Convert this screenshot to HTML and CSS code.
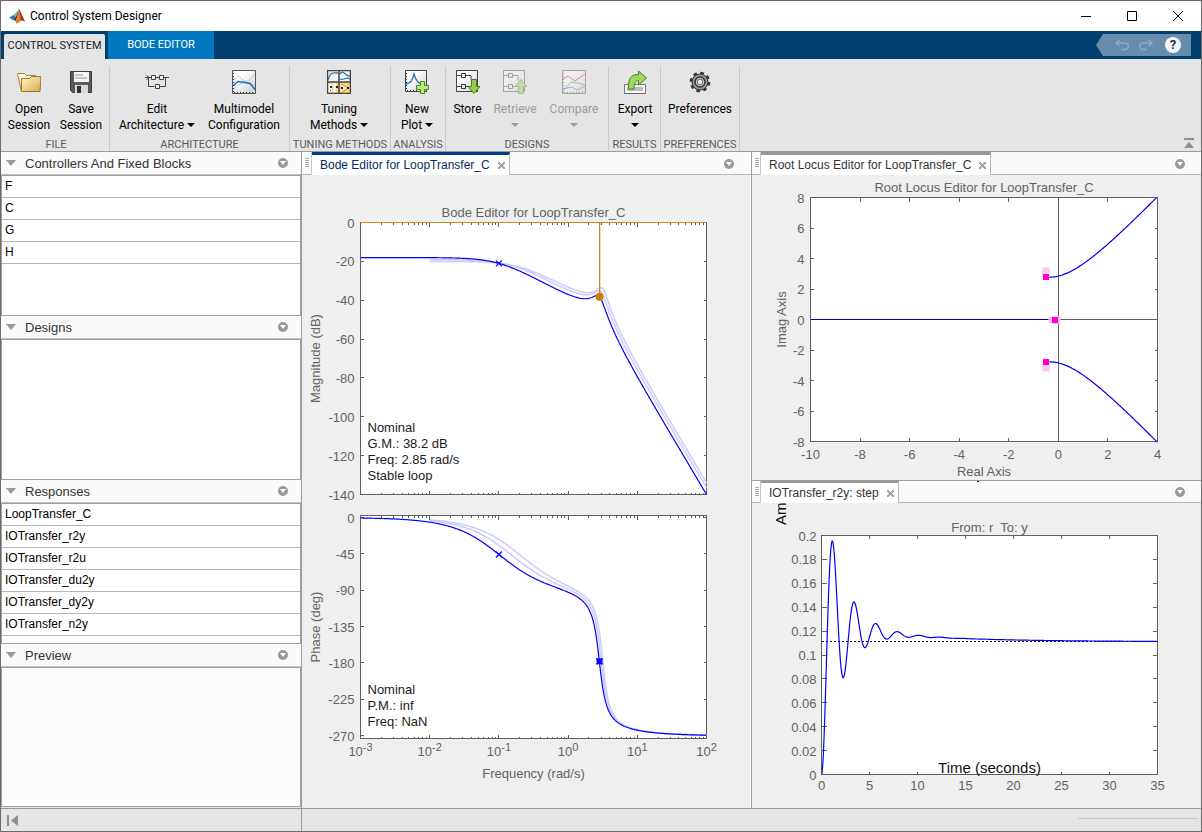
FILE: index.html
```html
<!DOCTYPE html>
<html lang="en">
<head>
<meta charset="utf-8">
<title>Control System Designer</title>
<link rel="stylesheet" href="styles.css">
</head>
<body>
<div class="window">
  <header class="titlebar">
    <svg class="logo" viewBox="0 0 16 16" width="16" height="16" aria-hidden="true">
      <path d="M0 9.400 4.600 7l2.200 1.800L4 12z" fill="#3f79b0"/>
      <path d="M4.600 7C6.500 6 7 3.600 9 2.200L6.800 8.800z" fill="#5fb4c9"/>
      <path d="M4 12 6.800 8.800 9.800 1.200C9 5 8.600 9 6.600 13.200 5.800 12.200 5 12 4 12z" fill="#5a2a3c"/>
      <path d="M9.800 1C10.700 1 12 5.500 16 13.600 13.800 12.200 12.400 12.300 11 13.600 9.800 15 8.500 15.200 7.200 15.400 6.900 14.400 6.800 13.800 6.600 13.200 8.600 10 9 5 9.800 1z" fill="#e07a28"/>
      <path d="M9.800 1C10.700 1 12 5.500 16 13.600 13.600 11.800 13 12 12 12.400 11.700 8.500 10.600 4 9.800 1z" fill="#9c2f1c"/>
    </svg>
    <h1 class="title">Control System Designer</h1>
    <div class="win-buttons">
      <button class="win-btn" aria-label="Minimize"><svg viewBox="0 0 12 12" width="12" height="12"><path d="M1 6.500h10" stroke="#000"/></svg></button>
      <button class="win-btn" aria-label="Maximize"><svg viewBox="0 0 12 12" width="12" height="12"><path d="M1.500 1.500h9v9h-9z" fill="none" stroke="#000"/></svg></button>
      <button class="win-btn" aria-label="Close"><svg viewBox="0 0 12 12" width="12" height="12"><path d="M1 1l10 10M11 1 1 11" stroke="#000"/></svg></button>
    </div>
  </header>

  <nav class="tabstrip">
    <button class="main-tab is-active">CONTROL SYSTEM</button>
    <button class="main-tab">BODE EDITOR</button>
    <div class="quick">
      <button class="quick-btn" aria-label="Undo"><svg viewBox="0 0 14 12" width="14" height="12"><path d="M4.500 1 1 4l3.500 3M1.500 4H10a2.600 2.600 0 0 1 0 6.500H6.500" fill="none" stroke="#85aed0" stroke-width="1.500"/></svg></button>
      <button class="quick-btn" aria-label="Redo"><svg viewBox="0 0 14 12" width="14" height="12"><path d="M9.500 1 13 4 9.500 7M12.500 4H4a2.600 2.600 0 0 0 0 6.500h3.500" fill="none" stroke="#85aed0" stroke-width="1.500"/></svg></button>
      <button class="quick-btn help" aria-label="Help">?</button>
    </div>
  </nav>

  <div class="ribbon">
    <section class="group g-file">
      <div class="tools">
        <button class="tool w52">
          <svg viewBox="0 0 24 24" width="24" height="24"><defs><linearGradient id="fold" x1="0" y1="0" x2="1" y2="1"><stop offset="0" stop-color="#fff6cc"/><stop offset="1" stop-color="#d9a94e"/></linearGradient></defs><path d="M.5 3.500h7l2 2h9v3l-14 13z" fill="#fbf3d4" stroke="#a0803c"/><path d="M4.500 8.500h8l2-2h9.500l-1 15H4.500z" fill="url(#fold)" stroke="#a07828"/></svg>
          <span>Open<br>Session</span></button>
        <button class="tool w52">
          <svg viewBox="0 0 24 24" width="24" height="24"><path d="M1.500 1.500h21v21h-19l-2-2z" fill="#5a5a5a" stroke="#3c3c3c"/><path d="M5 2h15v10H5z" fill="#f4f4f4"/><path d="M6 5h8M6 8h12" stroke="#999"/><path d="M6 15h13v8H6z" fill="#d8d8d8"/><path d="M8 16h4v7H8z" fill="#333"/></svg>
          <span>Save<br>Session</span></button>
      </div>
      <h2>FILE</h2>
    </section>
    <section class="group g-arch">
      <div class="tools">
        <button class="tool w94">
          <svg viewBox="0 0 24 24" width="24" height="24" fill="none" stroke="#444"><path d="M0 7.500h6M11 7.500h3M19 7.500h5M1.500 5.500l3 2-3 2M20.500 8v8.500h-6M3.500 8v8.500h6"/><path d="M6.500 5.500h4v4h-4zM14.500 5.500h4v4h-4zM10.500 14.500h4v4h-4z" fill="#eee"/></svg>
          <span>Edit<br>Architecture <i class="caret"></i></span></button>
        <button class="tool w80">
          <svg viewBox="0 0 24 24" width="24" height="24"><defs><linearGradient id="sheet" x1="0" y1="0" x2="1" y2="1"><stop offset=".3" stop-color="#fff"/><stop offset="1" stop-color="#ccc"/></linearGradient></defs><path d="M.5.500h23v23H.5z" fill="url(#sheet)" stroke="#555"/><path d="M1 17C6 2 5 5 11 10s9-5 12-6M1 20C8 12 15 10 23 16" fill="none" stroke="#a9c9ea"/><path d="M1 16 6 11.500l7 1 5 1 5 6" fill="none" stroke="#1f6fc0" stroke-width="1.500"/><path d="M2 22.500h21M1.500 3v19" stroke="#333" stroke-dasharray="1 2"/></svg>
          <span>Multimodel<br>Configuration</span></button>
      </div>
      <h2>ARCHITECTURE</h2>
    </section>
    <section class="group g-tuning">
      <div class="tools">
        <button class="tool w98">
          <svg viewBox="0 0 24 24" width="24" height="24"><path d="M.5.500h23v23H.5z" fill="#f4f4f4"/><path d="M1 12h11v12H1zM12 12h12v12H12z" fill="#f8d28a"/><path d="M1 14h4v8H1z" fill="#fff"/><path d="M1 10c3-9 5-7 10-7M13 4c4-5 4 2 10 2M13 9c4 2 6-3 10 0" fill="none" stroke="#3379b5" stroke-width="1.300"/><path d="M14 14l7 4-7 5" fill="#fff3d5" stroke="#e08c20"/><path d="M7.500 13v10" stroke="#fff" stroke-width="2"/><path d="M3 16h2v2H3zM9 16h2v2H9zM3 20h1v1H3zM14 17h2v2h-2zM20 17h2v2h-2z" fill="#222"/><path d="M.5.500h23v23H.5zM12 0v24M0 12h24" fill="none" stroke="#444" stroke-width="1.500"/></svg>
          <span>Tuning<br>Methods <i class="caret"></i></span></button>
      </div>
      <h2>TUNING METHODS</h2>
    </section>
    <section class="group g-analysis">
      <div class="tools">
        <button class="tool w52">
          <svg viewBox="0 0 24 24" width="24" height="24"><path d="M.5.500h21v21H.5z" fill="url(#sheet)" stroke="#444"/><path d="M1 14c5-1 6-3 8-10 2 7 4 9 9 11" fill="none" stroke="#2878b4" stroke-width="1.300"/><path d="M2 20.500h12M1.500 3v17" stroke="#333" stroke-dasharray="1 2"/><path d="M15.500 11.500h4v4h4v4h-4v4h-4v-4h-4v-4h4z" fill="#b8ea74" stroke="#458a2c"/></svg>
          <span>New<br>Plot <i class="caret"></i></span></button>
      </div>
      <h2>ANALYSIS</h2>
    </section>
    <section class="group g-designs">
      <div class="tools">
        <button class="tool w43">
          <svg viewBox="0 0 24 24" width="24" height="24"><path d="M.5.500h21v21H.5z" fill="url(#sheet)" stroke="#444"/><path d="M1 5.500h4M10 5.500h5v4M1 16.500h4M10 16.500h3" fill="none" stroke="#444"/><path d="M5.500 3.500h4v4h-4zM5.500 14.500h4v4h-4z" fill="#eee" stroke="#333"/><path d="M15.500 9.500h5v7h3.500l-6 7-6-7h3.500z" fill="#97cc48" stroke="#3f8428"/></svg>
          <span>Store</span></button>
        <button class="tool w52" disabled>
          <svg viewBox="0 0 24 24" width="24" height="24"><path d="M.5.500h21v21H.5z" fill="url(#sheet)" stroke="#444"/><path d="M1 5.500h4M10 5.500h5v5M1 16.500h4M10 16.500h3" fill="none" stroke="#444"/><path d="M5.500 3.500h4v4h-4zM5.500 14.500h4v4h-4z" fill="#eee" stroke="#333"/><path d="M15.500 23.500h5v-7H24l-6-7-6 7h3.500z" fill="#97cc48" stroke="#3f8428"/></svg>
          <span>Retrieve<br><i class="caret"></i></span></button>
        <button class="tool w66" disabled>
          <svg viewBox="0 0 24 24" width="24" height="24"><path d="M.5.500h23v23H.5z" fill="url(#sheet)" stroke="#444"/><path d="M1 9l5-3 7 5 10-7" fill="none" stroke="#d02020"/><path d="M2 20 9 12l7 1 7 2" fill="none" stroke="#28902c"/><path d="M1 19l9-2 5 3 8-4" fill="none" stroke="#2a60c0"/><path d="M2 22.500h21M1.500 3v19" stroke="#333" stroke-dasharray="1 2"/></svg>
          <span>Compare<br><i class="caret"></i></span></button>
      </div>
      <h2>DESIGNS</h2>
    </section>
    <section class="group g-results">
      <div class="tools">
        <button class="tool w52">
          <svg viewBox="0 0 24 24" width="24" height="24"><path d="M1.500 14.500h21v9h-21z" fill="#fafafa" stroke="#777"/><path d="M4 17h16v4H4z" fill="#bbb"/><path d="M5.500 19C5 8 8 4.500 15.500 4.500v-3.500L23.500 8l-8 7v-4.500c-3 0-4.500 3-4.500 8.500z" fill="#9ed860" stroke="#3f8428"/><path d="M23 24H1" stroke="#555"/></svg>
          <span>Export<br><i class="caret"></i></span></button>
      </div>
      <h2>RESULTS</h2>
    </section>
    <section class="group g-prefs">
      <div class="tools">
        <button class="tool w78">
          <svg viewBox="0 0 24 24" width="24" height="24"><circle cx="12" cy="12" r="8.800" fill="none" stroke="#333" stroke-width="3" stroke-dasharray="3.500 3.410"/><circle cx="12" cy="12" r="8" fill="#999" stroke="#333"/><circle cx="12" cy="12" r="5" fill="#d0d0d0" stroke="#333" stroke-width="1.500"/><circle cx="12" cy="12" r="2.800" fill="#e9e9e9" stroke="#666"/></svg>
          <span>Preferences</span></button>
      </div>
      <h2>PREFERENCES</h2>
    </section>
    <button class="collapse" aria-label="Minimize toolstrip"><svg viewBox="0 0 10 11" width="10" height="11"><path d="M0 0h10v2H0zM5 4l5 6H0z" fill="#8f8f8f"/></svg></button>
  </div>

  <main class="workspace">
    <aside class="sidebar">
      <section class="browser">
        <header class="browser-head"><i class="fold"></i><h3>Controllers And Fixed Blocks</h3><button class="menu" aria-label="Controllers menu"></button></header>
        <ul class="list"><li>F</li><li>C</li><li>G</li><li>H</li></ul>
      </section>
      <section class="browser">
        <header class="browser-head"><i class="fold"></i><h3>Designs</h3><button class="menu" aria-label="Designs menu"></button></header>
        <ul class="list"></ul>
      </section>
      <section class="browser">
        <header class="browser-head"><i class="fold"></i><h3>Responses</h3><button class="menu" aria-label="Responses menu"></button></header>
        <ul class="list"><li>LoopTransfer_C</li><li>IOTransfer_r2y</li><li>IOTransfer_r2u</li><li>IOTransfer_du2y</li><li>IOTransfer_dy2y</li><li>IOTransfer_n2y</li></ul>
      </section>
      <section class="browser">
        <header class="browser-head"><i class="fold"></i><h3>Preview</h3><button class="menu" aria-label="Preview menu"></button></header>
        <div class="list preview"></div>
      </section>
    </aside>

    <section class="pane pane-bode">
      <header class="doc-bar is-focused"><i class="grip"></i><div class="doc-tab"><span>Bode Editor for LoopTransfer_C</span><button class="close" aria-label="Close Bode Editor"></button></div><button class="menu" aria-label="Bode Editor menu"></button></header>
      <div class="canvas"><svg class="chart" id="bode"></svg></div>
    </section>

    <div class="right-col">
      <section class="pane">
        <header class="doc-bar"><i class="grip"></i><div class="doc-tab"><span>Root Locus Editor for LoopTransfer_C</span><button class="close" aria-label="Close Root Locus Editor"></button></div><button class="menu" aria-label="Root Locus menu"></button></header>
        <div class="canvas"><svg class="chart" id="locus"></svg></div>
      </section>
      <section class="pane pane-step">
        <header class="doc-bar"><i class="grip"></i><div class="doc-tab"><span>IOTransfer_r2y: step</span><button class="close" aria-label="Close step plot"></button></div><button class="menu" aria-label="Step plot menu"></button></header>
        <div class="canvas"><svg class="chart" id="step"></svg></div>
      </section>
    </div>
  </main>

  <footer class="status">
    <div class="status-left"><button class="rewind" aria-label="Collapse sidebar"><svg viewBox="0 0 11 11" width="11" height="11"><path d="M0 0h2v11H0zM11 0v11L4 5.500z" fill="#8f8f8f"/></svg></button></div>
    <div class="status-right"><i class="status-line"></i></div>
  </footer>
</div>
<script src="charts.js"></script>
</body>
</html>
```

FILE: styles.css
```css
* { box-sizing: border-box; }
body { margin: 0; }
h1, h2, h3, ul { margin: 0; padding: 0; font-weight: 400; }
ul { list-style: none; }
button { border: 0; padding: 0; margin: 0; background: none; font: inherit; color: inherit; }

.window {
  display: flex;
  flex-direction: column;
  min-height: 100vh;
  border: 1px solid #6b6b6b;
  background: #e5e5e5;
  color: #000;
  font-family: Roboto, "Open Sans", sans-serif;
  font-size: 12px;
}

/* title bar */
.titlebar { display: flex; align-items: center; height: 30px; padding-left: 8px; background: #fff; }
.title { margin-left: 5px; font-size: 12px; line-height: 16px; }
.win-buttons { display: flex; margin-left: auto; }
.win-btn { display: grid; place-items: center; width: 46px; height: 30px; }

/* main tabs */
.tabstrip { display: flex; height: 28px; padding-left: 3px; background: #004071; }
.main-tab { width: 106px; margin-left: 3px; padding-bottom: 1px; background: #0078bf; color: #fff; font-size: 11px; white-space: nowrap; }
.main-tab.is-active { width: 101px; margin: 3px 0 0; border-radius: 2px 2px 0 0; background: #e5e5e5; color: #222; padding-bottom: 3px; }
.quick {
  display: flex; align-items: center; gap: 10px;
  width: 95px; height: 22px; margin: 3px 10px 0 auto; padding-left: 19px;
  background: #688cac;
  clip-path: polygon(7px 0, 100% 0, 100% 100%, 7px 100%, 0 50%);
}
.quick-btn { display: grid; place-items: center; width: 14px; height: 16px; }
.help { width: 16px; margin-left: 2px; border-radius: 50%; background: #f4f7fa; color: #1c3350; font-weight: 700; font-size: 13px; line-height: 16px; }

/* ribbon */
.ribbon { display: flex; height: 93px; padding: 7px 0 0 2px; border-bottom: 1px solid #9c9c9c; }
.group { display: flex; flex-direction: column; border-right: 1px solid #cacaca; }
.g-file { width: 107px; }
.g-arch { width: 180px; }
.g-tuning { width: 101px; }
.g-analysis { width: 55px; }
.g-designs { width: 163px; }
.g-results { width: 52px; }
.g-prefs { width: 79px; }
.tools { display: flex; }
.group h2 { margin-top: auto; color: #5c5c5c; font-size: 11px; line-height: 13px; text-align: center; white-space: nowrap; }
.tool { display: flex; flex-direction: column; align-items: center; gap: 7px; flex: none; padding-top: 4px; line-height: 16px; white-space: nowrap; }
.tool:disabled { color: #9c9c9c; }
.tool:disabled svg { opacity: .4; }
.w43 { width: 43px; }
.w52 { width: 52px; }
.w66 { width: 66px; }
.w78 { width: 78px; }
.w80 { width: 80px; }
.w94 { width: 94px; }
.w98 { width: 98px; }
.caret { display: inline-block; margin: 0 0 2px 4px; border: 4px solid transparent; border-top-color: currentColor; border-bottom: 0; }
br + .caret { margin-left: 0; }
.collapse { align-self: flex-end; margin: 0 7px 2px auto; line-height: 0; }

/* workspace */
.workspace {
  display: grid;
  flex: 1;
  grid-template-columns: 301px minmax(0, 450fr) minmax(0, 449fr);
  font-family: "Liberation Sans", Arial, sans-serif;
}
.sidebar { display: grid; grid-template-rows: repeat(4, 1fr); border-right: 1px solid #9c9c9c; }
.browser { display: flex; flex-direction: column; min-height: 0; }
.browser-head { display: flex; align-items: center; height: 23px; padding: 0 13px 0 5px; border-bottom: 1px solid #c0c0c0; background: #fafafa; color: #333; }
.browser-head h3 { margin-left: 9px; padding-top: 1px; font-size: 13px; line-height: 16px; }
.fold { border: 5px solid transparent; border-top: 6px solid #999; border-bottom: 0; }
.menu { position: relative; width: 10px; height: 10px; margin-left: auto; border-radius: 50%; background: #999; }
.menu::after { content: ""; position: absolute; left: 2px; top: 3px; border: 3px solid transparent; border-top: 4px solid #fff; border-bottom: 0; }
.list { flex: 1; border: 1px solid #a0a0a0; background: #fff; font-size: 12px; }
.list li { height: 22px; padding-left: 3px; border-bottom: 1px solid #b8b8b8; line-height: 20px; }
.list.preview { margin-bottom: 1px; background: #fcfcfc; }

.pane { display: flex; flex-direction: column; min-width: 0; min-height: 0; }
.pane-bode { border-right: 1px solid #9c9c9c; }
.right-col { display: grid; grid-template-rows: 1fr 1fr; min-width: 0; }
.pane-step { position: relative; border-top: 1px solid #9c9c9c; }
.pane-step::before { content: ""; position: absolute; left: 50%; top: 0; width: 2px; height: 1px; background: #111; }
.pane-step .doc-bar { height: 22px; }
.pane-step .doc-tab { border-top-width: 2px; }
.doc-bar { display: flex; align-items: center; flex: none; height: 23px; padding-right: 16px; background: linear-gradient(#fafafa, #fafafa) 0 0 / 100% calc(100% - 1px) no-repeat #b8b8b8; }
.grip { align-self: stretch; width: 9px; border-right: 1px solid #c8c8c8; background: repeating-linear-gradient(#b0b0b0 0 1px, transparent 1px 2px) 3px 6px / 4px 10px no-repeat; }
.is-focused { padding-right: 17px; }
.is-focused .grip { width: 10px; }
.doc-tab { display: flex; align-items: center; align-self: stretch; gap: 8px; padding: 0 4px 0 8px; border-top: 3px solid #999; border-right: 1px solid #b8b8b8; background: #fff; color: #333; line-height: 16px; white-space: nowrap; }
.is-focused .doc-tab { border-top-color: #004088; color: #003060; }
.close { width: 7px; height: 7px; background: linear-gradient(45deg, transparent 40%, #a4a4a4 40% 60%, transparent 60%), linear-gradient(-45deg, transparent 40%, #a4a4a4 40% 60%, transparent 60%); }
.canvas { position: relative; flex: 1; min-height: 240px; background: #efefef; }
.pane-bode .canvas { border-right: 1px solid #fff; }
.chart { position: absolute; inset: 0; width: 100%; height: 100%; overflow: hidden; font-size: 13px; fill: #636363; }
.chart text { white-space: pre; }
.chart .box { fill: #fff; }
.chart .axis { fill: none; stroke: #5f5f5f; shape-rendering: crispEdges; }
.chart .curve { fill: none; stroke: #0000f8; stroke-width: 1.2px; }
.chart .ghost { fill: none; stroke: #ccccfc; stroke-width: 1.5px; }
.chart .thick { stroke-width: 2px; }
.chart .note { fill: #1c1c1c; }
.chart .big { fill: #111; font-size: 15px; }
.chart .sup { font-size: 11px; }
.chart .bound { fill: #d08a1c; }
.chart .orange { fill: #cf7f00; }
.chart .pink { fill: #f0c; }
.chart .pale { fill: #fbc8f2; }
.chart .dashed { fill: none; stroke: #000; stroke-dasharray: 2 2; shape-rendering: crispEdges; }
.chart .real { stroke: #0000a8; shape-rendering: crispEdges; }

/* status bar */
.status { display: flex; height: 23px; border-top: 1px solid #9c9c9c; }
.status-left { display: flex; align-items: center; width: 301px; padding-left: 6px; border-right: 1px solid #9c9c9c; }
.rewind { line-height: 0; }
.status-right { display: flex; flex: 1; justify-content: flex-end; padding: 9px 3px 0 0; }
.status-line { width: 120px; height: 1px; background: #c8c8c8; }
```

FILE: charts.js
```js
const NS = "http://www.w3.org/2000/svg";

function add(svg, tag, attrs, text) {
  const el = document.createElementNS(NS, tag);
  for (const k in attrs) el.setAttribute(k, attrs[k]);
  if (text !== undefined) el.textContent = text;
  svg.appendChild(el);
  return el;
}

function label(svg, x, y, text, anchor, cls) {
  return add(svg, "text", { x, y, "text-anchor": anchor || "middle", class: cls || "" }, text);
}

function vertical(svg, x, y, text, anchor, cls) {
  label(svg, x, y, text, anchor, cls).setAttribute("transform", `rotate(-90 ${x} ${y})`);
}

function plane(svg, id, b) {
  add(svg, "rect", { class: "box", x: b.l, y: b.t, width: b.r - b.l, height: b.b - b.t });
  const clip = add(svg, "clipPath", { id });
  add(clip, "rect", { x: b.l, y: b.t, width: b.r - b.l + 1, height: b.b - b.t + 1 });
}

function frame(svg, b, xs, ys, tx, ty) {
  let d = `M${b.l} ${b.t}H${b.r}V${b.b}H${b.l}Z`;
  for (const [x, len] of xs) d += `M${x} ${b.b}v${-(len || tx)}M${x} ${b.t}v${len || tx}`;
  for (const y of ys) d += `M${b.l} ${y}h${ty}M${b.r} ${y}h${-ty}`;
  add(svg, "path", { class: "axis", d });
}

function line(svg, pts, cls, clip) {
  add(svg, "path", { class: cls, "clip-path": `url(#${clip})`, d: "M" + pts.map(p => p[0].toFixed(2) + " " + p[1].toFixed(2)).join("L") });
}

const snap = v => Math.round(v - 0.5) + 0.5;

function size(svg) {
  svg.replaceChildren();
  const r = svg.getBoundingClientRect();
  return [Math.round(r.width), Math.round(r.height)];
}

/* loop transfer a / ((s + a)(s^2 + s + w2)) */
function loop(a, w2, w) {
  const mag = a / (Math.hypot(w, a) * Math.hypot(w2 - w * w, w));
  const ph = -Math.atan2(w, a) - Math.atan2(w, w2 - w * w);
  return [20 * Math.log10(mag), ph * 180 / Math.PI];
}

function drawBode() {
  const svg = document.getElementById("bode");
  const [W, H] = size(svg);
  const plotH = H - 138;
  const l = 58.5, r = W - 43.5;
  const m = { l, r, t: 47.5, b: 47.5 + Math.round(plotH * 272 / 495) };
  const p = { l, r, t: m.b + 21, b: H - 69.5 };
  const X = e => l + (e + 3) / 5 * (r - l);
  const M = v => m.t - v / 140 * (m.b - m.t);
  const P = v => p.t + (2.5 - v) / 276 * (p.b - p.t);
  plane(svg, "clip-mag", m);
  plane(svg, "clip-ph", p);

  const ticks = [];
  for (let e = -3; e < 2; e++) for (let k = 1; k < 10; k++) ticks.push([snap(X(e + Math.log10(k))), k === 1 ? 4 : 2]);
  const mags = [0, -20, -40, -60, -80, -100, -120, -140];
  const phs = [0, -45, -90, -135, -180, -225, -270];
  frame(svg, m, ticks, mags.map(v => snap(M(v))), 2, 3);
  frame(svg, p, ticks, phs.map(v => snap(P(v))), 2, 3);

  for (const [a, w2, from, cls] of [[0.15, 9, -2, "ghost"], [0.2, 10, -2, "ghost"], [0.1, 8, -3, "curve"]]) {
    const mp = [], pp = [];
    for (let e = from; e <= 2.001; e += 0.01) {
      const [g, f] = loop(a, w2, 10 ** e);
      mp.push([X(e), M(g)]);
      pp.push([X(e), P(f)]);
    }
    line(svg, mp, cls, "clip-mag");
    line(svg, pp, cls, "clip-ph");
  }

  const [g0, f0] = loop(0.1, 8, 0.1);
  for (const [x, y] of [[X(-1), M(g0)], [X(-1), P(f0)]])
    add(svg, "path", { class: "curve", d: `M${x - 3} ${y - 3}l6 6m0-6l-6 6` });

  const xc = snap(X(Math.log10(2.846)));
  add(svg, "rect", { class: "bound", x: l, y: m.t - 0.5, width: r - l, height: 1 });
  add(svg, "rect", { class: "bound", x: xc - 0.5, y: m.t, width: 1.3, height: M(-38) - m.t });
  add(svg, "circle", { class: "orange", cx: xc, cy: M(-38.2), r: 4 });
  const yc = P(-178);
  add(svg, "path", { class: "curve thick", d: `M${xc - 3} ${yc - 3}l6 6m0-6l-6 6M${xc - 3} ${yc}h6M${xc} ${yc - 3}v6` });

  mags.forEach(v => label(svg, l - 6, M(v) + 5, v, "end"));
  phs.forEach(v => label(svg, l - 6, P(v) + 5, v, "end"));
  for (let e = -3; e <= 2; e++) {
    const t = label(svg, X(e), p.b + 17, "10");
    add(t, "tspan", { class: "sup", dy: -5 }, e);
  }
  label(svg, (l + r) / 2, m.t - 6, "Bode Editor for LoopTransfer_C");
  label(svg, (l + r) / 2, p.b + 39, "Frequency (rad/s)");
  vertical(svg, 18, (m.t + m.b) / 2, "Magnitude (dB)");
  vertical(svg, 18, (p.t + p.b) / 2, "Phase (deg)");
  ["Nominal", "G.M.: 38.2 dB", "Freq: 2.85 rad/s", "Stable loop"].forEach((s, i) => label(svg, l + 7, m.b - 63 + i * 16, s, "start", "note"));
  ["Nominal", "P.M.: inf", "Freq: NaN"].forEach((s, i) => label(svg, l + 7, p.b - 45 + i * 16, s, "start", "note"));
}

function drawLocus() {
  const svg = document.getElementById("locus");
  const [W, H] = size(svg);
  const b = { l: 58.5, r: W - 43.5, t: 22.5, b: H - 38.5 };
  const X = v => b.l + (v + 10) / 14 * (b.r - b.l);
  const Y = v => b.t + (8 - v) / 16 * (b.b - b.t);
  plane(svg, "clip-loc", b);
  const xs = [-10, -8, -6, -4, -2, 0, 2, 4], ys = [8, 6, 4, 2, 0, -2, -4, -6, -8];
  frame(svg, b, xs.map(v => [snap(X(v))]), ys.map(v => snap(Y(v))), 4, 3);
  add(svg, "path", { class: "axis", d: `M${snap(X(0))} ${b.t}V${b.b}M${b.l} ${snap(Y(0))}H${b.r}` });
  add(svg, "path", { class: "real", d: `M${b.l} ${snap(Y(0))}H${X(-0.1)}` });
  const up = [], down = [];
  for (let s = -0.5; s <= 4.001; s += 0.05) {
    const w = Math.sqrt(3 * s * s + 2.2 * s + 8.1);
    up.push([X(s), Y(w)]);
    down.push([X(s), Y(-w)]);
  }
  line(svg, up, "curve", "clip-loc");
  line(svg, down, "curve", "clip-loc");
  const mark = (x, y, cls, n) => add(svg, "rect", { class: cls, x: Math.round(X(x)) - n / 2, y: Math.round(Y(y)) - n / 2, width: n, height: n });
  for (const [x, y] of [[-0.5, 3.16], [-0.5, 2.96], [-0.5, -2.96], [-0.5, -3.16], [-0.25, 0], [-0.05, 0]]) mark(x, y, "pale", 7);
  for (const [x, y] of [[-0.5, 2.77], [-0.5, -2.77], [-0.12, 0]]) mark(x, y, "pink", 6);
  xs.forEach(v => label(svg, X(v), b.b + 17, v));
  ys.forEach(v => label(svg, b.l - 6, Y(v) + 5, v, "end"));
  label(svg, (b.l + b.r) / 2, b.t - 6, "Root Locus Editor for LoopTransfer_C");
  label(svg, (b.l + b.r) / 2, b.b + 34, "Real Axis");
  vertical(svg, 34, (b.t + b.b) / 2, "Imag Axis");
}

/* step response of (s + 0.1) / (s^3 + 1.1 s^2 + 8.1 s + 0.9) */
function stepSeries() {
  let s = [0, 0, 0];
  const h = 0.01, out = [];
  const f = v => [v[1], v[2], 1 - 0.9 * v[0] - 8.1 * v[1] - 1.1 * v[2]];
  const mix = (v, k, c) => v.map((q, i) => q + k[i] * c);
  for (let n = 0; n <= 3500; n++) {
    if (n % 5 === 0) out.push([n * h, 0.1 * s[0] + s[1]]);
    const k1 = f(s), k2 = f(mix(s, k1, h / 2)), k3 = f(mix(s, k2, h / 2)), k4 = f(mix(s, k3, h));
    s = s.map((q, i) => q + h / 6 * (k1[i] + 2 * k2[i] + 2 * k3[i] + k4[i]));
  }
  return out;
}

function drawStep() {
  const svg = document.getElementById("step");
  const [W, H] = size(svg);
  const b = { l: 69.5, r: W - 43.5, t: 32.5, b: H - 33.5 };
  const X = v => b.l + v / 35 * (b.r - b.l);
  const Y = v => b.b - v / 0.2 * (b.b - b.t);
  plane(svg, "clip-step", b);
  const xs = [0, 5, 10, 15, 20, 25, 30, 35];
  const ys = [0, 0.02, 0.04, 0.06, 0.08, 0.1, 0.12, 0.14, 0.16, 0.18, 0.2];
  frame(svg, b, xs.map(v => [snap(X(v))]), ys.map(v => snap(Y(v))), 3, 5);
  add(svg, "path", { class: "dashed", d: `M${b.l} ${snap(Y(0.111))}H${b.r}` });
  line(svg, stepSeries().map(([t, y]) => [X(t), Y(y)]), "curve", "clip-step");
  xs.forEach(v => label(svg, X(v), b.b + 15, v));
  ys.forEach(v => label(svg, b.l - 5, Y(v) + 5, v, "end"));
  label(svg, (b.l + b.r) / 2, b.t - 4, "From: r  To: y");
  label(svg, (b.l + b.r) / 2, b.b - 2, "Time (seconds)", "middle", "big");
  vertical(svg, 34, 22, "Am", "start", "big");
}

function drawAll() {
  drawBode();
  drawLocus();
  drawStep();
}

drawAll();
window.addEventListener("resize", drawAll);
```
